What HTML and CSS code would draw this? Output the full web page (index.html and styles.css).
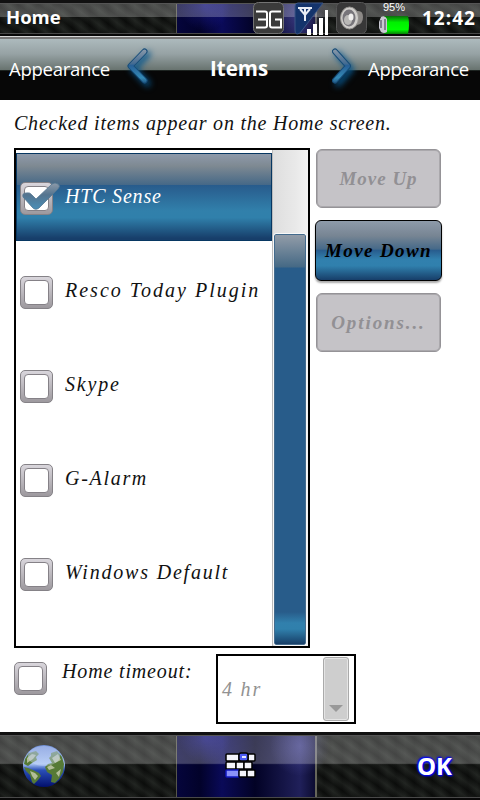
FILE: index.html
```html
<!DOCTYPE html>
<html>
<head>
    <meta charset="utf-8">
    <title>Home</title>
    <link rel="stylesheet" href="styles.css">
</head>
<body>
<header class="status">
    <span class="title">Home</span>
    <div class="tray">
        <svg class="net" width="32" height="33" viewBox="0 0 32 33">
            <rect x=".5" y=".5" width="30" height="31" rx="5" fill="#3b3b3b" stroke="#737373"/>
            <path d="M3 9.500h9q2 0 2 2v12q0 2-2 2H3M5 17.500h9M28 9.500H19q-2 0-2 2v12q0 2 2 2h9v-8h-6" fill="none" stroke="#fff" stroke-width="2"/>
        </svg>
        <svg width="36" height="34" viewBox="0 0 36 34">
            <path d="M4 1h25L6 31q-5 3-5-3V4q0-3 3-3z" fill="#14346c" stroke="#3b5584"/>
            <path d="M4 6h14M6 7l5 6 5-6M11 6v13" fill="none" stroke="#e8edf5" stroke-width="2"/>
            <path d="M13 27h4v6h-4zM19 22h4v11h-4zM25 16h4v17h-4zM31 8h3v25h-3z" fill="#fff"/>
        </svg>
        <svg width="32" height="33" viewBox="0 0 32 33">
            <rect x=".5" y=".5" width="30" height="31" rx="5" fill="#383838" stroke="#555"/>
            <path d="M16 6l5 3q6-1 6 6t-6 8l-6 4z" fill="#8c8986"/>
            <ellipse cx="13.500" cy="16" rx="9" ry="11" fill="#cfcdca" stroke="#92908d"/>
            <ellipse cx="13" cy="16" rx="6.500" ry="8.500" fill="#77757a"/>
            <ellipse cx="12" cy="18" rx="4" ry="5" fill="#b9b8b6"/>
            <ellipse cx="15" cy="15" rx="2.500" ry="3.500" fill="#f0efed"/>
        </svg>
        <div class="battery">
            <span>95%</span>
            <svg width="32" height="18" viewBox="0 0 32 18">
                <defs>
                    <linearGradient id="cell" x2="0" y2="1">
                        <stop offset="0" stop-color="#0b6f0b"/>
                        <stop offset=".35" stop-color="#00f000"/>
                        <stop offset=".75" stop-color="#00ff00"/>
                        <stop offset="1" stop-color="#078007"/>
                    </linearGradient>
                </defs>
                <path d="M6 0h24q2 8 0 18H6z" fill="url(#cell)"/>
                <path d="M3 1q4-2 6 2v13q-3 2-6 0l-2-4V6z" fill="#c9c9d2"/>
                <path d="M3 4v8M7 3v11" stroke="#686877" stroke-width="1.500"/>
            </svg>
        </div>
    </div>
    <span class="clock">12:42</span>
</header>

<nav class="tabs">
    <span>Appearance</span>
    <svg class="arrow" width="30" height="46" viewBox="0 0 30 46">
        <defs>
            <linearGradient id="glass" x1="0" y1="4" x2="0" y2="40" gradientUnits="userSpaceOnUse">
                <stop offset="0" stop-color="#8b9aaa"/>
                <stop offset=".4" stop-color="#456c92"/>
                <stop offset=".46" stop-color="#286096"/>
                <stop offset=".8" stop-color="#348ab6"/>
                <stop offset="1" stop-color="#1b4773"/>
            </linearGradient>
        </defs>
        <path d="M20.500 6.500L6.500 21 20.500 35.500" class="edge"/>
        <path d="M20.500 6.500L6.500 21 20.500 35.500" class="fill"/>
    </svg>
    <b>Items</b>
    <svg class="arrow" width="30" height="46" viewBox="0 0 30 46">
        <path d="M5 6.500L18 21 5 35.500" class="edge"/>
        <path d="M5 6.500L18 21 5 35.500" class="fill"/>
    </svg>
    <span>Appearance</span>
</nav>

<main>
    <p class="hint">Checked items appear on the Home screen.</p>
    <div class="columns">
        <div class="listbox">
            <ul>
                <li class="selected">
                    <i class="check">
                        <svg width="42" height="34" viewBox="0 0 42 34">
                            <defs>
                                <linearGradient id="tick" x2="0" y2="1">
                                    <stop offset="0" stop-color="#8d9aa9"/>
                                    <stop offset=".45" stop-color="#54748f"/>
                                    <stop offset="1" stop-color="#4a8fb8"/>
                                </linearGradient>
                            </defs>
                            <path d="M3 15q-1-4 3-4 4-1 6 2l4 4L32 2q3-2 6 0t0 5L19 26q-4 3-7-1z" fill="url(#tick)" stroke="#547792" stroke-width=".8"/>
                        </svg>
                    </i>
                    <span class="w-htc">HTC Sense</span>
                </li>
                <li><i class="check"></i><span class="w-resco">Resco Today Plugin</span></li>
                <li><i class="check"></i><span class="w-skype">Skype</span></li>
                <li><i class="check"></i><span class="w-alarm">G-Alarm</span></li>
                <li><i class="check"></i><span class="w-windows">Windows Default</span></li>
            </ul>
            <div class="scroll"><div class="thumb"></div></div>
        </div>
        <div class="buttons">
            <button class="w-up" disabled>Move Up</button>
            <button class="active w-down">Move Down</button>
            <button class="w-options" disabled>Options...</button>
        </div>
    </div>
    <div class="timeout">
        <i class="check"></i>
        <label>Home timeout:</label>
        <div class="select">
            <span>4 hr</span>
            <div class="drop"></div>
        </div>
    </div>
</main>

<footer class="softkeys">
    <svg width="42" height="42" viewBox="0 0 42 42">
        <defs>
            <linearGradient id="sea" x2="0" y2="1">
                <stop offset="0" stop-color="#6f8fd6"/>
                <stop offset=".45" stop-color="#a9c4f2"/>
                <stop offset=".6" stop-color="#2a4fb8"/>
                <stop offset="1" stop-color="#020f6c"/>
            </linearGradient>
            <linearGradient id="shine" x2="0" y2="1">
                <stop offset="0" stop-color="#a9bbea" stop-opacity=".7"/>
                <stop offset="1" stop-color="#dce8ff" stop-opacity=".3"/>
            </linearGradient>
        </defs>
        <circle cx="21" cy="21" r="21" fill="url(#sea)"/>
        <path d="M2 14l4-6 7-2 3 3-3 3 1 3-5 3-4 3-4-2zM1 22l4 1 5 2 6 3 2 3-3 4-2 2-2 2-2-2-2-7-4-4z" fill="#567a36"/>
        <path d="M28 8l6-2 5 6 2 7-1 8-4 7-4 4-4-1 1-7-5-3-2-5 3-3 4-1-3-5 2-2z" fill="#567a36"/>
        <path d="M4 13l5-4 4 1-3 4-6 4zM7 26l5 2 3 3-3 4-3-4zM29 13l6-4 3 6-6 3zM24 22l4-2 4 3-6 2zM33 28l5-4-2 8z" fill="#b2bd98"/>
        <ellipse cx="21" cy="11" rx="16" ry="10" fill="url(#shine)"/>
    </svg>
    <svg width="32" height="26" viewBox="0 0 32 26">
        <g fill="#f4f4fa" stroke="#000" stroke-width="1.500">
            <rect x="1" y="2" width="13" height="7" rx="1"/>
            <rect x="23" y="2" width="7" height="7" rx="1"/>
            <rect x="14" y="1" width="9" height="8" rx="2" fill="#4d5cf5"/>
            <rect x="1" y="10" width="10" height="7" rx="1"/>
            <rect x="11" y="10" width="8" height="7" rx="1"/>
            <rect x="19" y="10" width="8" height="7" rx="1"/>
            <rect x="1" y="18" width="13" height="7" rx="1" fill="#8b92f8" stroke="#1018c0"/>
            <rect x="14" y="18" width="8" height="7" rx="1"/>
            <rect x="22" y="18" width="8" height="7" rx="1"/>
        </g>
        <path d="M17 4h4v2h-4z" fill="#e5e8ff"/>
    </svg>
    <b>OK</b>
</footer>
</body>
</html>
```

FILE: styles.css
```css
body{
    margin:0;
    width:480px;
    height:800px;
    background:#fff;
    overflow:hidden;
    display:grid;
    grid-template-rows:36px 64px 632px 68px;
    font-family:"Open Sans","Noto Sans",sans-serif;
}
.status, .softkeys{
    box-sizing:border-box;
    display:flex;
    color:#fff;
    background:
        linear-gradient(#111 0 3px, #555 3px 4px, transparent 4px),
        linear-gradient(0deg, #080808 0 2px, #494949 2px 3px, transparent 3px),
        linear-gradient(rgba(255,255,255,.22), rgba(255,255,255,.24) 46%, transparent 48%),
        radial-gradient(circle at 205px 5px, rgba(40,40,200,.45), transparent 26px),
        radial-gradient(circle at 300px 14px, rgba(110,110,210,.35), transparent 30px),
        linear-gradient(90deg, transparent 176px, #55554a 176px 177px, #05053c 177px, #02022a 200px, #0a0a58 222px, #020225 255px, #20205a 300px, #0c0c30 315px, #66665a 315px 317px, transparent 317px),
        repeating-linear-gradient(35deg, rgba(0,0,0,.35), rgba(60,64,60,.22) 6px, rgba(0,0,0,.35) 12px),
        repeating-linear-gradient(90deg, #101210, #1b1e1b 9px, #101210 18px);
}
.status{
    padding-left:6px;
    align-items:center;
}
.title{
    font-size:18.500px;
    font-weight:700;
    width:247px;
    line-height:34px;
    margin-top:-2px;
}
.tray{
    display:flex;
    height:34px;
    margin-top:1px;
}
.tray .net{
    margin-right:9px;
}
.tray svg:nth-child(3){
    margin-left:6px;
}
.battery{
    width:40px;
    margin-left:6px;
    display:flex;
    flex-direction:column;
    align-items:center;
    font:11px/11px "Liberation Sans",sans-serif;
}
.battery svg{
    margin-top:3px;
}
.clock{
    margin-left:8px;
    font-size:19px;
    font-weight:700;
    line-height:34px;
    letter-spacing:1px;
}
.tabs{
    box-sizing:border-box;
    display:flex;
    padding-left:9px;
    background:linear-gradient(#d6d6d6 0 1px, #777 1px 3px, #adbabd 3px, #96a2a4 18px, #68736f 34px, #33403a 34px, #070707 35px);
    color:#fff;
    font-size:18.500px;
    line-height:65px;
}
.tabs span{
    width:115px;
    letter-spacing:-.25px;
}
.tabs b{
    width:120px;
    margin-left:56px;
    font-size:20.500px;
}
.arrow{
    margin-top:9px;
    flex:none;
    filter:drop-shadow(3px 3px 3px #07558b);
}
.tabs b + .arrow{
    margin-right:8px;
}
.edge, .fill{
    fill:none;
    stroke:#174c78;
    stroke-width:6px;
    stroke-linecap:round;
    stroke-linejoin:round;
}
.fill{
    stroke:url(#glass);
    stroke-width:4px;
}
main{
    padding-left:14px;
    font-family:"Liberation Serif",serif;
    font-style:italic;
    font-size:20px;
    color:#111;
}
.hint{
    margin:12px 0 14px;
    line-height:22px;
    letter-spacing:.78px;
}
.columns{
    display:flex;
}
.listbox{
    box-sizing:border-box;
    width:296px;
    height:500px;
    border:2px solid #000;
    display:flex;
}
ul{
    margin:0;
    padding:3px 0 0;
    list-style:none;
    width:256px;
}
li{
    height:94px;
    box-sizing:border-box;
    padding:29px 0 0 4px;
    display:flex;
    line-height:28px;
}
li > span{
    margin-left:12px;
    white-space:nowrap;
}
li.selected{
    height:88px;
    margin-bottom:6px;
    border:1px solid #073762;
    padding:28px 0 0 3px;
    background:linear-gradient(#8e9aab, #7e8992 14%, #456887 36%, #285b8c 36%, #3180ab 66%, #3080ab 74%, #173e6a 98%);
    color:#fff;
}
.check{
    box-sizing:border-box;
    position:relative;
    flex:none;
    width:33px;
    height:33px;
    border-radius:5px;
    border:1px solid #858287;
    background:linear-gradient(#d9d6dc, #9d999e);
}
.check:before{
    content:"";
    position:absolute;
    inset:3px;
    border:1px solid #858187;
    border-radius:4px;
    background:#fff;
}
.check svg{
    position:absolute;
    left:-1px;
    top:-1px;
}
.scroll{
    box-sizing:border-box;
    width:36px;
    border-left:1px solid #bbb;
    padding:84px 2px 1px 1px;
    background:linear-gradient(90deg, #dedede, #e9e9e9 65%, #f3f3f3);
}
.thumb{
    height:411px;
    box-sizing:border-box;
    border:1px solid #436b8d;
    border-radius:2px;
    outline:1px solid #f8f8f8;
    background:linear-gradient(#929ca8, #456985 32px, #285c8a 33px, #285c8a 377px, #3180ad 388px, #3080ac 394px, #183f68 409px);
}
.buttons{
    padding-left:5px;
}
button{
    display:block;
    box-sizing:border-box;
    width:125px;
    height:59px;
    margin:1px 0 12px 1px;
    padding:0;
    border:1px solid #959397;
    border-radius:6px;
    background:#c5c3c7;
    box-shadow:inset 0 0 0 1px #aaa8ac;
    color:#929094;
    font:italic bold 19px "Liberation Serif",serif;
}
button.active{
    width:127px;
    height:61px;
    margin:0 0 12px;
    border-color:#000;
    color:#000;
    background:linear-gradient(#8e9baa, #778593 25%, #456989 48%, #285b8c 49%, #3180ae 65%, #3080ad 76%, #173e69);
    box-shadow:0 2px 2px #aaa;
}
.timeout{
    display:flex;
    padding-top:6px;
}
.timeout .check{
    margin-top:8px;
}
label{
    width:154px;
    margin-left:15px;
    line-height:34px;
    letter-spacing:.85px;
}
.select{
    box-sizing:border-box;
    width:140px;
    height:70px;
    border:2px solid #000;
    padding:1px 5px 1px 4px;
    display:flex;
    justify-content:space-between;
    color:#929292;
    line-height:64px;
    letter-spacing:1.800px;
}
.drop{
    box-sizing:border-box;
    width:26px;
    height:64px;
    border:1px solid #aaa;
    border-radius:3px;
    background:#cecece;
    box-shadow:inset 0 0 0 1px #e4e4e4;
}
.drop:after{
    content:"";
    display:block;
    width:0;
    margin:47px auto 0;
    border:7px solid transparent;
    border-top-color:#999;
    border-bottom:0;
}
.w-htc{ letter-spacing:.8px; }
.w-resco{ letter-spacing:2px; }
.w-skype{ letter-spacing:1.800px; }
.w-alarm{ letter-spacing:1.700px; }
.w-windows{ letter-spacing:1.800px; }
.w-up{ letter-spacing:1px; }
.w-down{ letter-spacing:1.400px; }
.w-options{ letter-spacing:1.900px; }
.softkeys{
    padding:13px 0 0 23px;
}
.softkeys svg:nth-child(2){
    margin:7px 0 0 160px;
}
.softkeys b{
    margin-left:160px;
    font:bold 24px/41px "Open Sans",sans-serif;
    text-shadow:0 0 3px #00f, 0 0 2px #00f, 1px 1px 2px #00f, -1px -1px 2px #00f;
}
```
